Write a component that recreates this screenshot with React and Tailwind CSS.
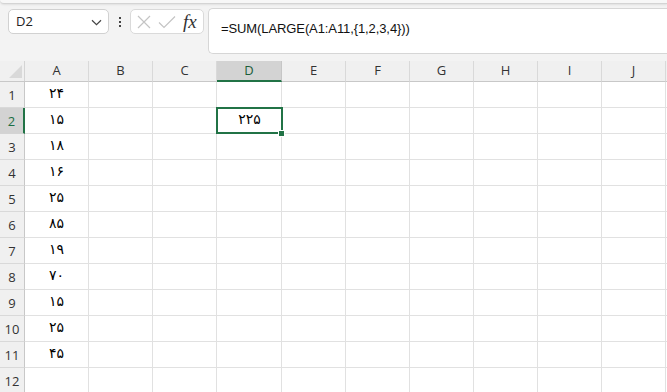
import React from "react";

const cols = ["A", "B", "C", "D", "E", "F", "G", "H", "I", "J"];
const colA = ["۲۴", "۱۵", "۱۸", "۱۶", "۲۵", "۸۵", "۱۹", "۷۰", "۱۵", "۲۵", "۴۵", ""];

const uiFont = { fontFamily: '"Open Sans", "Noto Sans", sans-serif' };

export default function App() {
  return (
    <div className="w-[667px] h-[392px] overflow-hidden bg-[#f3f3f3] relative">
      {/* ribbon bottom edge */}
      <div className="h-[4px] bg-[#f7f7f7] border-b border-[#d4d4d4] rounded-bl-[8px] shadow-[0_1px_2px_rgba(0,0,0,0.08)]" />
      {/* formula bar */}
      <div className="flex items-start h-[57px] pt-[5px] pl-[8px]">
        <div
          className="w-[101px] h-[25px] bg-white border border-[#d1d1d1] rounded-[5px] flex items-center justify-between pl-[7px] pr-[6px] text-[13px] text-[#222]"
          style={uiFont}
        >
          <span>D2</span>
          <svg width="11" height="7" viewBox="0 0 11 7" className="mt-[1px]">
            <path d="M1 1.2 L5.5 5.6 L10 1.2" fill="none" stroke="#444" strokeWidth="1.2" />
          </svg>
        </div>
        <div className="w-[21px] h-[25px] flex flex-col items-center justify-center gap-[2px]">
          <div className="w-[2px] h-[2px] bg-[#444]" />
          <div className="w-[2px] h-[2px] bg-[#444]" />
          <div className="w-[2px] h-[2px] bg-[#444]" />
        </div>
        <div className="w-[74px] h-[25px] bg-white border border-[#dadada] rounded-[5px] flex items-center pl-[6px]">
          <svg width="14" height="14" viewBox="0 0 14 14">
            <path d="M1 1 L13 13 M13 1 L1 13" stroke="#c4c4c4" strokeWidth="1.2" fill="none" />
          </svg>
          <svg width="18" height="14" viewBox="0 0 18 14" className="ml-[7px]">
            <path d="M1 7.5 L6 12.5 L17 1.5" stroke="#c4c4c4" strokeWidth="1.2" fill="none" />
          </svg>
          <span
            className="ml-[7px] text-[19px] italic text-[#333] leading-none"
            style={{ fontFamily: '"Liberation Serif", "DejaVu Serif", serif' }}
          >
            fx
          </span>
        </div>
        <div className="ml-[4px] flex-1 h-[46px] -mt-[1px] bg-white border border-r-0 border-[#d6d6d6] rounded-l-[5px] pl-[12px] pt-[6px]">
          <span
            className="text-[13px] text-[#111] tracking-[-0.1px]"
            style={{ fontFamily: '"Liberation Sans", Arial, sans-serif' }}
          >
            =SUM(LARGE(A1:A11,{"{"}1,2,3,4{"}"}))
          </span>
        </div>
      </div>

      {/* grid */}
      <div className="grid grid-cols-[25px_64px_64px_64px_65px_64px_64px_64px_64px_64px_64px_64px] bg-white">
        {/* header row */}
        <div className="h-[21px] bg-[#f0f0f0] border-b border-[#c8c8c8] relative overflow-hidden">
          <div className="absolute right-[3px] bottom-[3px] w-0 h-0 border-l-[13px] border-l-transparent border-b-[13px] border-b-[#d9d9d9]" />
          <div className="absolute right-0 top-[1px] w-[1px] h-[1px] bg-black" />
          <div className="absolute right-0 top-0 bottom-0 w-[1px] bg-[#d4d4d4]" />
        </div>
        {cols.map((c) => (
          <div
            key={c}
            className={
              c === "D"
                ? "h-[21px] bg-[#d3d3d3] border-b-2 border-r border-r-[#c6c6c6] border-b-[#217346] flex items-center justify-center text-[13px] text-[#1b5e3a]"
                : "h-[21px] bg-[#f0f0f0] border-b border-r border-r-[#d9d9d9] border-b-[#c8c8c8] flex items-center justify-center text-[13px] text-[#333]"
            }
            style={uiFont}
          >
            <span className={c === "D" ? "mt-[1px]" : ""}>{c}</span>
          </div>
        ))}
        <div className="h-[21px] bg-[#f0f0f0] border-b border-[#c8c8c8]" />

        {colA.map((v, i) => {
          const r = i + 1;
          return (
            <React.Fragment key={r}>
              <div
                className={
                  r === 2
                    ? "h-[26px] bg-[#d3d3d3] border-b border-[#d4d4d4] border-r-2 border-r-[#217346] flex items-end justify-center pb-[2px] text-[13px] text-[#1b6e45]"
                    : "h-[26px] bg-[#f0f0f0] border-b border-[#d9d9d9] border-r border-r-[#c8c8c8] flex items-end justify-center pb-[2px] text-[13px] text-[#333]"
                }
                style={uiFont}
              >
                {r}
              </div>
              {cols.map((c) => (
                <div
                  key={c}
                  className="h-[26px] border-b border-r border-[#e1e1e1] relative flex items-center justify-center pb-[3px] text-[14px] text-[#000]"
                  style={{ fontFamily: '"DejaVu Sans", "Noto Sans", sans-serif' }}
                >
                  {c === "A" ? v : ""}
                  {c === "D" && r === 2 && (
                    <>
                      <div className="absolute z-10 -left-[1px] -top-[1px] w-[67px] h-[27px] border-2 border-[#217346] flex items-center justify-center pb-[2px]">
                        ۲۲۵
                      </div>
                      <div className="absolute z-20 -right-[4px] -bottom-[4px] w-[7px] h-[7px] bg-[#217346] border border-white" />
                    </>
                  )}
                </div>
              ))}
              <div className="h-[26px] border-b border-[#e1e1e1]" />
            </React.Fragment>
          );
        })}
      </div>
    </div>
  );
}
